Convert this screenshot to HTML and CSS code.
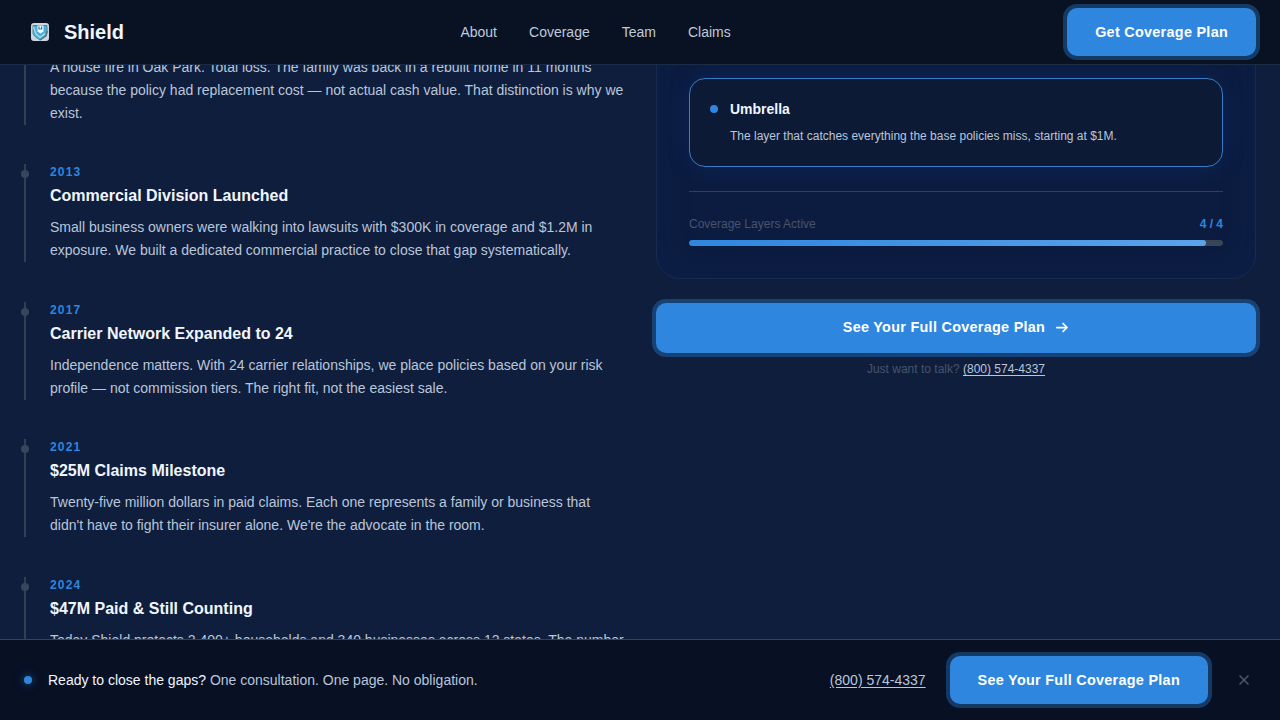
FILE: index.html
```html
<!DOCTYPE html>
<html lang="en">
<head>
    <meta charset="UTF-8">
    <meta name="viewport" content="width=device-width, initial-scale=1.0">
    <title>Shield</title>
    <link rel="stylesheet" href="styles.css">
</head>
<body>

    <header class="site-header">
        <a class="logo" href="#">
            <svg class="logo-icon" width="18" height="18" viewBox="0 0 18 18">
                <rect width="18" height="18" rx="3" fill="#cbd8df"/>
                <path d="M2 2.5h14v7c0 3.5-4 5.5-7 7.5-3-2-7-4-7-7.5z" fill="#48aeda" stroke="#5f7f8d" stroke-width="1"/>
                <path d="M2.5 4l2.5 7 4 3.5 5-4" fill="none" stroke="#a9dff2" stroke-width="1.3"/>
                <path d="M6.5 2.5h6v6l-3 2-3-2z" fill="#f1fbff"/>
                <path d="M8 3.5v2.5h2.6v-2.5" fill="none" stroke="#287fa8" stroke-width="1.2"/>
                <path d="M9 17l6-4 1.2-5" fill="none" stroke="#566b78" stroke-width="1.2"/>
            </svg>
            <span>Shield</span>
        </a>
        <nav class="main-nav">
            <a href="#">About</a>
            <a href="#">Coverage</a>
            <a href="#">Team</a>
            <a href="#">Claims</a>
        </nav>
        <a class="btn" href="#">Get Coverage Plan</a>
    </header>

    <main class="content">
        <section class="timeline">
            <article class="milestone continued">
                <p>A house fire in Oak Park. Total loss. The family was back in a rebuilt home in 11 months because the policy had replacement cost — not actual cash value. That distinction is why we exist.</p>
            </article>
            <article class="milestone">
                <div class="year">2013</div>
                <h3>Commercial Division Launched</h3>
                <p>Small business owners were walking into lawsuits with $300K in coverage and $1.2M in exposure. We built a dedicated commercial practice to close that gap systematically.</p>
            </article>
            <article class="milestone">
                <div class="year">2017</div>
                <h3>Carrier Network Expanded to 24</h3>
                <p>Independence matters. With 24 carrier relationships, we place policies based on your risk profile — not commission tiers. The right fit, not the easiest sale.</p>
            </article>
            <article class="milestone">
                <div class="year">2021</div>
                <h3>$25M Claims Milestone</h3>
                <p>Twenty-five million dollars in paid claims. Each one represents a family or business that didn't have to fight their insurer alone. We're the advocate in the room.</p>
            </article>
            <article class="milestone">
                <div class="year">2024</div>
                <h3>$47M Paid &amp; Still Counting</h3>
                <p>Today Shield protects 2,400+ households and 340 businesses across 12 states. The number</p>
            </article>
        </section>

        <aside class="plan">
            <div class="plan-card">
                <div class="layer">
                    <span class="layer-dot"></span>
                    <div>
                        <h4>Umbrella</h4>
                        <p>The layer that catches everything the base policies miss, starting at $1M.</p>
                    </div>
                </div>
                <div class="progress">
                    <div class="progress-label">
                        <span>Coverage Layers Active</span>
                        <strong>4 / 4</strong>
                    </div>
                    <div class="progress-track">
                        <div class="progress-fill"></div>
                    </div>
                </div>
            </div>
            <a class="btn btn-wide" href="#">
                See Your Full Coverage Plan
                <svg width="14" height="14" viewBox="0 0 14 14" fill="none" stroke="currentColor" stroke-width="1.75" stroke-linecap="round" stroke-linejoin="round">
                    <path d="M1.8 7.5h10.2M8 3.5l4 4-4 4"/>
                </svg>
            </a>
            <p class="talk">Just want to talk? <a href="#">(800) 574-4337</a></p>
        </aside>
    </main>

    <footer class="sticky-bar">
        <span class="pulse"></span>
        <p class="bar-text"><span>Ready to close the gaps?</span> One consultation. One page. No obligation.</p>
        <a class="phone" href="#">(800) 574-4337</a>
        <a class="btn" href="#">See Your Full Coverage Plan</a>
        <button class="close" aria-label="Close">
            <svg width="10" height="10" viewBox="0 0 10 10" stroke="currentColor" stroke-width="1.5">
                <path d="M.5 .5l9 9M9.5 .5l-9 9"/>
            </svg>
        </button>
    </footer>

</body>
</html>
```
FILE: styles.css
```css
* {
    box-sizing: border-box;
    margin: 0;
    padding: 0;
}

body {
    display: flex;
    flex-direction: column;
    height: 100vh;
    overflow: hidden;
    font-family: "Liberation Sans", Arial, sans-serif;
    background-color: #0f1e3d;
    color: #b9c6da;
}

a {
    color: inherit;
    text-decoration: none;
}

/* Header */
.site-header {
    display: flex;
    justify-content: space-between;
    align-items: center;
    height: 65px;
    padding: 0 24px;
    background-color: #081223;
    border-bottom: 1px solid #1b2c47;
    flex-shrink: 0;
}

.logo {
    display: flex;
    align-items: center;
    gap: 15px;
    padding-left: 7px;
    font-size: 20px;
    font-weight: bold;
    color: #eff6ff;
}

.main-nav {
    display: flex;
    gap: 32px;
    font-size: 14px;
    color: #bfcadb;
}

.btn {
    display: flex;
    align-items: center;
    justify-content: center;
    height: 48px;
    padding: 0 28px;
    border-radius: 10px;
    background-color: #2e86de;
    color: #fff;
    font-size: 14.4px;
    font-weight: bold;
    letter-spacing: 0.02em;
    box-shadow: 0 0 0 4px rgba(46, 134, 222, 0.35);
}

/* Two columns */
.content {
    display: grid;
    grid-template-columns: 1fr 1fr;
    align-items: start;
    gap: 32px;
    flex: 1;
    min-height: 0;
    padding: 0 24px;
    overflow: hidden;
}

/* Timeline */
.timeline {
    display: flex;
    flex-direction: column;
    gap: 39.3px;
    margin-top: -9.3px;
}

.milestone {
    position: relative;
    padding-left: 24px;
    border-left: 2px solid #313f54;
}

.milestone::before {
    content: "";
    position: absolute;
    left: -5px;
    top: 6px;
    width: 8px;
    height: 8px;
    border-radius: 50%;
    background-color: #37475b;
}

.milestone.continued {
    margin-bottom: -0.3px;
}

.milestone.continued::before {
    display: none;
}

.year {
    margin-bottom: 5px;
    font-size: 12px;
    line-height: 16px;
    font-weight: bold;
    letter-spacing: 1.2px;
    color: #2e86de;
}

.milestone h3 {
    margin-bottom: 9.7px;
    font-size: 16px;
    line-height: 21.4px;
    color: #eff6ff;
}

.milestone p {
    font-size: 14px;
    line-height: 23.1px;
}

/* Coverage plan */
.plan-card {
    margin-top: -40px;
    padding: 52px 32px 32px;
    border: 1px solid #162b50;
    border-radius: 24px;
    background-color: #0c1c40;
    box-shadow: inset 0 0 40px rgba(0, 55, 130, 0.12);
}

.layer {
    display: flex;
    gap: 12px;
    height: 89px;
    padding: 20px;
    border: 1px solid #387bc7;
    border-radius: 16px;
    background-color: #0c1a36;
    box-shadow: 0 0 24px rgba(0, 75, 170, 0.2);
}

.layer-dot {
    width: 8px;
    height: 8px;
    margin-top: 6px;
    border-radius: 50%;
    background-color: #2e86de;
}

.layer h4 {
    margin-bottom: 8px;
    font-size: 14px;
    line-height: 20px;
    color: #eff6ff;
}

.layer p {
    font-size: 12px;
    line-height: 19px;
}

.progress {
    margin-top: 24px;
    padding-top: 24px;
    border-top: 1px solid #303f5b;
}

.progress-label {
    display: flex;
    justify-content: space-between;
    margin-bottom: 8px;
    font-size: 12px;
    line-height: 16px;
    color: #46546c;
}

.progress-label strong {
    color: #2e86de;
}

.progress-track {
    height: 6px;
    border-radius: 3px;
    overflow: hidden;
    background-color: #364657;
}

.progress-fill {
    width: 96.8%;
    height: 100%;
    border-radius: 3px;
    background: linear-gradient(90deg, #2e86de, #5ba3ea);
}

.btn-wide {
    gap: 10px;
    height: 50px;
    margin-top: 24px;
    padding-bottom: 2px;
}

.talk {
    margin-top: 8px;
    font-size: 12px;
    line-height: 16px;
    text-align: center;
    color: #46546c;
}

.talk a {
    color: #b9c6da;
    text-decoration: underline;
    text-underline-offset: 2px;
}

/* Bottom bar */
.sticky-bar {
    display: flex;
    align-items: center;
    height: 81px;
    padding: 0 24px;
    border-top: 1px solid #34445a;
    background-color: #081024;
    font-size: 14px;
    flex-shrink: 0;
}

.pulse {
    width: 8px;
    height: 8px;
    margin-right: 16px;
    border-radius: 50%;
    background-color: #2e86de;
    box-shadow: 0 0 8px rgba(46, 134, 222, 0.6);
}

.bar-text span {
    color: #eff6ff;
}

.phone {
    margin-left: auto;
    margin-right: 24px;
    text-decoration: underline;
    text-underline-offset: 2px;
}

.close {
    display: flex;
    align-items: center;
    justify-content: center;
    width: 24px;
    height: 24px;
    margin-left: 24px;
    border: none;
    background: none;
    color: #4a566b;
    cursor: pointer;
}
```
